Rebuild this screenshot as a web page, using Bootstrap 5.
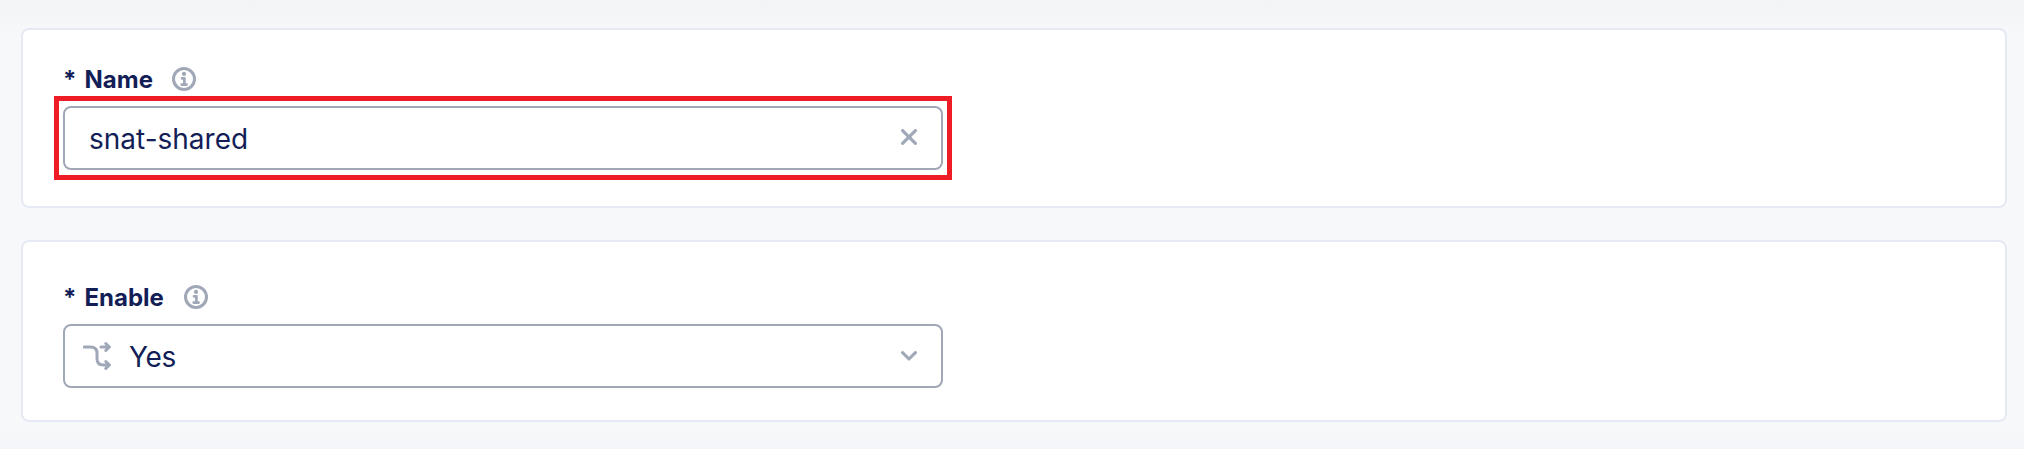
<!DOCTYPE html>
<html lang="en">
<head>
<meta charset="utf-8">
<meta name="viewport" content="width=device-width, initial-scale=1">
<title>SNAT</title>
<link href="https://cdn.jsdelivr.net/npm/bootstrap@5.3.0/dist/css/bootstrap.min.css" rel="stylesheet">
<style>
  body { font-family: Inter, "Liberation Sans", sans-serif; color: #131e57; height: 449px; overflow: hidden;
    background: linear-gradient(180deg, #f3f4f6 0, #f4f5f7 8px, #f7f8fa 34px, #f7f8fa 424px, #f4f5f8 449px); }
  .page { padding: 28px 17px 0 21px; gap: 32px; }
  .panel { border: 2px solid #e6e9f3; border-radius: 8px; padding: 0 40px; height: 180px; }
  .panel-enable { height: 182px; }
  .field { width: 880px; }
  .field-title { font-size: 24px; line-height: 36px; height: 36px; font-weight: 700; margin-top: 31px; margin-bottom: 9px; }
  .field-title span { padding-top: 1px; margin-bottom: -1px; }
  .panel-enable .field-title { margin-top: 37px; }
  .star { width: 21.5px; }
  .info { margin-left: 19px; margin-top: -1px; }
  .panel-enable .info { margin-left: 20px; }
  .control { height: 64px; border: 2px solid #a0a8b8; border-radius: 8px; font-size: 28px; line-height: 40px; padding: 0 24px; }
  .control .value { padding-top: 2px; }
  .control-select { padding-left: 18px; }
  .control-select .value { margin-left: 18px; letter-spacing: -.3px; }
  .clear { margin-top: -2px; }
  .frame { position: absolute; inset: -12px -11px; border: 5px solid #ee1c25; }
  svg { display: block; fill: none; stroke: #a0a8b8; stroke-linecap: round; stroke-linejoin: round; flex: none; }
</style>
</head>
<body>
<main class="page d-flex flex-column">
  <section class="panel bg-white">
    <div class="field">
      <div class="field-title d-flex align-items-center">
        <span class="star">*</span><span>Name</span>
        <svg class="info" width="24" height="24" viewBox="0 0 24 24"><circle cx="12" cy="12" r="10.500" stroke-width="3"/><circle cx="12" cy="6.900" r="2.100" fill="#a0a8b8" stroke="none"/><path d="M10 11.300h2.400v6M9.700 17.600h4.900" stroke-width="2.700"/></svg>
      </div>
      <div class="control d-flex align-items-center position-relative">
        <span class="value me-auto">snat-shared</span>
        <svg class="clear" width="16" height="16" viewBox="0 0 16 16"><path d="M1.600 1.600l12.800 12.800M14.400 1.600L1.600 14.400" stroke-width="3.200"/></svg>
        <span class="frame"></span>
      </div>
    </div>
  </section>
  <section class="panel panel-enable bg-white">
    <div class="field">
      <div class="field-title d-flex align-items-center">
        <span class="star">*</span><span>Enable</span>
        <svg class="info" width="24" height="24" viewBox="0 0 24 24"><circle cx="12" cy="12" r="10.500" stroke-width="3"/><circle cx="12" cy="6.900" r="2.100" fill="#a0a8b8" stroke="none"/><path d="M10 11.300h2.400v6M9.700 17.600h4.900" stroke-width="2.700"/></svg>
      </div>
      <div class="control control-select d-flex align-items-center">
        <svg width="28" height="30" viewBox="0 0 28 30"><path d="M1.300 6H7.500c4.500 0 6.500 2 6.500 6v5.500c0 4.500 2 6.500 6.500 6.500H26M18 6h8M22.800 2.500l3.600 3.500-3.600 3.500M22.800 20.500l3.600 3.500-3.600 3.500" stroke-width="3"/></svg>
        <span class="value me-auto">Yes</span>
        <svg width="16" height="10" viewBox="0 0 16 10"><path d="M1.600 1.600L8 8l6.400-6.400" stroke-width="3.100"/></svg>
      </div>
    </div>
  </section>
</main>
<script src="https://cdn.jsdelivr.net/npm/bootstrap@5.3.0/dist/js/bootstrap.bundle.min.js"></script>
</body>
</html>
